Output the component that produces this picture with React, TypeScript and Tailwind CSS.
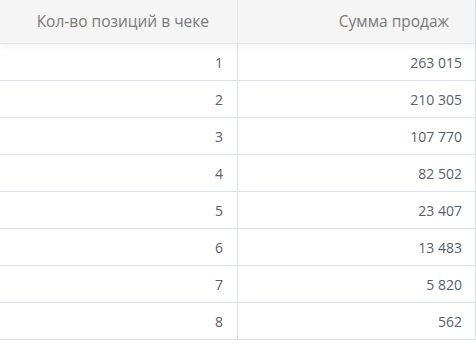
import React from "react";

const rows: [string, string][] = [
  ["1", "263 015"],
  ["2", "210 305"],
  ["3", "107 770"],
  ["4", "82 502"],
  ["5", "23 407"],
  ["6", "13 483"],
  ["7", "5 820"],
  ["8", "562"],
];

export default function App() {
  return (
    <div
      className="w-[476px] h-[344px] bg-white overflow-hidden"
      style={{ fontFamily: '"Open Sans", "Noto Sans", sans-serif' }}
    >
      <div className="w-[476px] border-r border-[#dde3ee]">
        <div className="relative z-10 flex h-[44px] bg-[#f5f5f5] border-b border-[#e3e3e3] shadow-[0_2px_8px_rgba(0,0,0,0.06)] text-[15.5px] text-[#7a7a7a]">
          <div className="w-[238px] shrink-0 border-r border-[#e6e6e6] flex items-center justify-end pr-[28px]">
            Кол-во позиций в чеке
          </div>
          <div className="flex-1 flex items-center justify-end pr-[26px]">
            Сумма продаж
          </div>
        </div>
        {rows.map(([a, b]) => (
          <div
            key={a}
            className="flex h-[37px] border-b border-[#dde3ee] text-[14px] text-[#58606e]"
          >
            <div className="w-[238px] shrink-0 border-r border-[#dde3ee] flex items-center justify-end pr-[14px]">
              {a}
            </div>
            <div className="flex-1 flex items-center justify-end pr-[13px]">
              {b}
            </div>
          </div>
        ))}
      </div>
    </div>
  );
}
